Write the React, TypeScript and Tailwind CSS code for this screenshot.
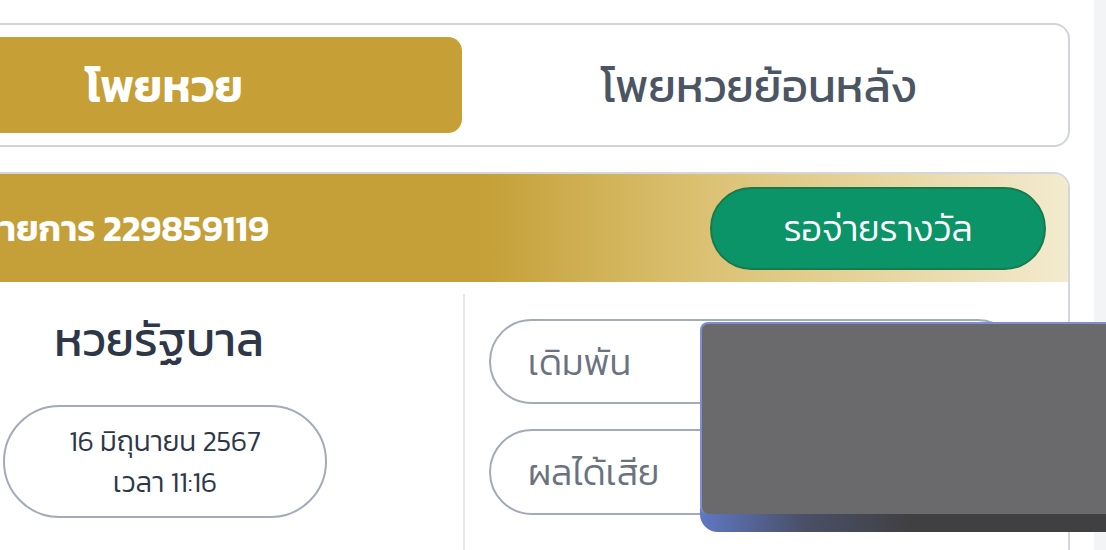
import React from "react";

const thai = { fontFamily: '"Kanit", "Prompt", "Noto Sans Thai UI", "Noto Sans Thai", "Noto Sans", "DejaVu Sans", sans-serif' };

export default function App() {
  return (
    <div className="w-full h-[550px] bg-[#f3f4f6] overflow-hidden" style={thai}>
      <div className="w-[1094px] h-[550px] bg-white overflow-hidden">
        <div className="ml-[-147px] w-[1217px] pt-[23px] flex flex-col gap-[25px]">
          {/* Tabs */}
          <div className="grid grid-cols-2 p-3 border-2 border-[#d1d5db] rounded-2xl bg-white">
            <div className="h-[96px] rounded-[14px] bg-[#c6a037] flex items-center justify-center text-white font-semibold text-[46px]">
              โพยหวย
            </div>
            <div className="h-[96px] flex items-center justify-center text-[#4b5563] font-normal text-[46px]">
              โพยหวยย้อนหลัง
            </div>
          </div>

          {/* Card */}
          <div className="border-2 border-[#d4d6dc] rounded-t-2xl overflow-hidden">
            <div className="h-[108px] flex items-center justify-between pl-[127px] pr-[22px] bg-[linear-gradient(90deg,#c5a038_0%,#c5a038_52%,#d9be6c_68%,#f3ebcf_100%)]">
              <div className="text-white font-semibold text-[36px]">รายการ 229859119</div>
              <div className="w-[336px] h-[83px] rounded-full bg-[#0b9467] border-2 border-[#177a4e] flex items-center justify-center text-white font-light text-[36px]">
                รอจ่ายรางวัล
              </div>
            </div>
            <div className="relative flex h-[300px]">
              <div className="w-[608px] flex flex-col items-center pt-[30px]">
                <div className="text-[47px] text-[#2d3748] font-normal leading-[56px]">หวยรัฐบาล</div>
                <div className="mt-[37px] ml-[12px] w-[324px] h-[113px] rounded-full border-2 border-[#a3abb8] flex flex-col items-center justify-center text-[#2d3748] font-light text-[28px] leading-[41px]">
                  <div>16 มิถุนายน 2567</div>
                  <div>เวลา 11:16</div>
                </div>
              </div>
              <div className="mt-[12px] w-[2px] bg-[#e5e7eb]" />
              <div className="flex-1 pl-[24px] pr-[48px] pt-[37px] flex flex-col gap-[25px]">
                <div className="h-[85px] rounded-full border-2 border-[#a3abb8] flex items-center pl-[37px] text-[36px] font-light text-[#6b7280]">
                  เดิมพัน
                </div>
                <div className="h-[86px] rounded-full border-2 border-[#a3abb8] flex items-center pl-[37px] text-[36px] font-light text-[#6b7280]">
                  ผลได้เสีย
                </div>
              </div>
            </div>
          </div>
        </div>
      </div>
      {/* redaction block overlay */}
      <div className="absolute left-[700px] top-[322px] w-[420px] h-[210px]">
        <div className="absolute inset-0 top-[186px] rounded-bl-[18px] bg-[linear-gradient(90deg,#5f78c4_0%,#4a4f66_25%,#404043_50%,#404043_100%)]" />
        <div className="absolute left-0 top-0 w-full h-[192px] rounded-[8px] bg-[#6a6a6c] border-t-[2px] border-l-[2px] border-[#7d8fd0]" />
      </div>
    </div>
  );
}
